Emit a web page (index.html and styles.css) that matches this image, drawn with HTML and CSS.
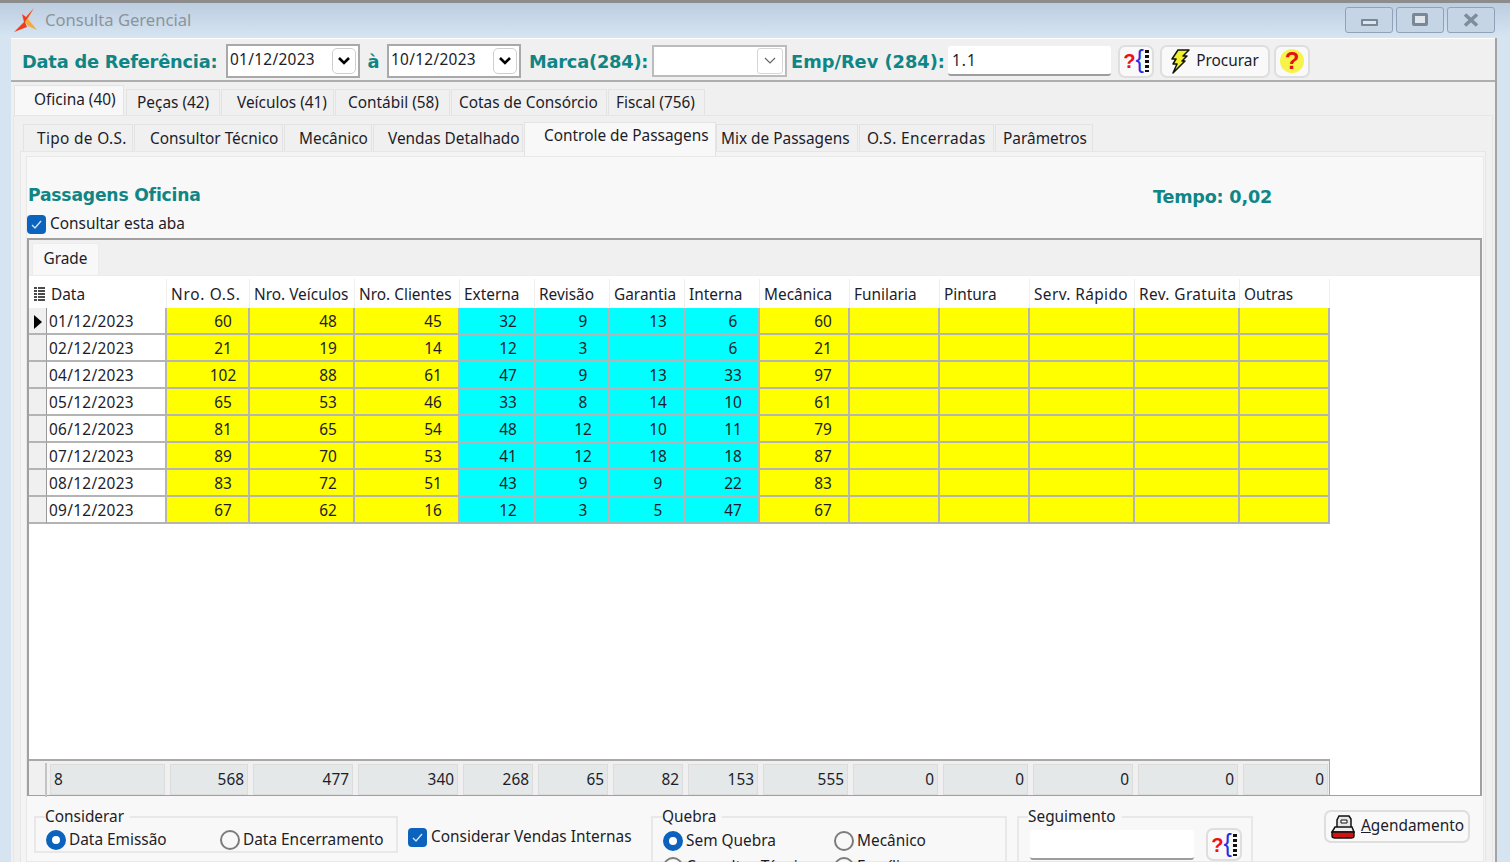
FILE: index.html
```html
<!DOCTYPE html>
<html lang="pt-BR">
<head>
<meta charset="utf-8">
<title>Consulta Gerencial</title>
<link rel="stylesheet" href="styles.css">
</head>
<body>
<div class="window">
  <header class="titlebar">
    <svg class="logo" width="26" height="26" viewBox="0 0 26 26"><path d="M21 0 L15 11 L24 22 L15 18 L12 14 Z" fill="#f6a93f"/><path d="M21 0 L13 9 L9 6 L11 14 L1 24 L14 19 L12 14 Z" fill="#ee3f1d"/></svg>
    <span class="title">Consulta Gerencial</span>
    <div class="winbtns">
      <button class="winbtn"><span class="g-min"></span></button>
      <button class="winbtn"><span class="g-max"></span></button>
      <button class="winbtn"><svg width="18" height="14" viewBox="0 0 18 14"><path d="M3 1.5 L15 12.5 M15 1.5 L3 12.5" stroke="#7f8d9b" stroke-width="3.6" fill="none"/></svg></button>
    </div>
  </header>
  <main class="client">
    <div class="toolbar">
      <span class="lbl l-data">Data de Referência:</span>
      <div class="date"><span>01/12/2023</span><b class="drop"><svg width="14" height="10" viewBox="0 0 14 10"><path d="M2 2 L7 7 L12 2" stroke="#000" stroke-width="2.6" fill="none"/></svg></b></div>
      <span class="lbl l-a">à</span>
      <div class="date"><span>10/12/2023</span><b class="drop"><svg width="14" height="10" viewBox="0 0 14 10"><path d="M2 2 L7 7 L12 2" stroke="#000" stroke-width="2.6" fill="none"/></svg></b></div>
      <span class="lbl l-marca">Marca(284):</span>
      <div class="combo"><b class="drop2"><svg width="14" height="9" viewBox="0 0 14 9"><path d="M2 2 L7 7 L12 2" stroke="#666" stroke-width="1.2" fill="none"/></svg></b></div>
      <span class="lbl l-emp">Emp/Rev (284):</span>
      <div class="edit">1.1</div>
      <button class="btn b-q"><span class="qm">?</span><span class="br">{</span><i class="dots"></i></button>
      <button class="btn b-proc"><svg width="20" height="25" viewBox="0 0 20 25"><path d="M8 1 L19 1 L13 7 L17 7 L12 12 L15 12 L3 24 L7 15 L3 15 L6 10 L2 10 Z" fill="#f2ef2c" stroke="#111" stroke-width="1.5" stroke-linejoin="round"/></svg><span>Procurar</span></button>
      <button class="btn b-help"><span class="helpq">?</span></button>
    </div>
    <div class="pages">
      <nav class="tabs outer">
        <span class="tab on t1">Oficina (40)</span>
        <span class="tab t2">Peças (42)</span>
        <span class="tab t3">Veículos (41)</span>
        <span class="tab t4">Contábil (58)</span>
        <span class="tab t5">Cotas de Consórcio</span>
        <span class="tab t6">Fiscal (756)</span>
      </nav>
      <div class="outer-panel">
        <nav class="tabs inner">
          <span class="tab i1">Tipo de O.S.</span>
          <span class="tab i2">Consultor Técnico</span>
          <span class="tab i3">Mecânico</span>
          <span class="tab i4">Vendas Detalhado</span>
          <span class="tab on i5">Controle de Passagens</span>
          <span class="tab i6">Mix de Passagens</span>
          <span class="tab i7">O.S. Encerradas</span>
          <span class="tab i8">Parâmetros</span>
        </nav>
        <section class="sheet">
          <div class="sheetin">
          <div class="headrow">
            <h2>Passagens Oficina</h2>
            <span class="tempo">Tempo: 0,02</span>
          </div>
          <label class="chk c-top"><i class="box"><svg width="13" height="11" viewBox="0 0 13 11"><path d="M2 6 L5 9 L11 2" stroke="#cfe3f7" stroke-width="1.4" fill="none"/></svg></i>Consultar esta aba</label>
          <div class="gridbox">
            <div class="gridtabs"><span class="gtab">Grade</span></div>
            <div class="gridbody">
              <div class="row hdr">
                <div class="ind"><svg width="11" height="14" viewBox="0 0 11 14"><path d="M0 1h3M4 1h7M0 4h3M4 4h7M0 7h3M4 7h7M0 10h3M4 10h7M0 13h3M4 13h7" stroke="#111" stroke-width="1.4"/></svg></div>
                <div>Data</div><div class="wide">Nro. O.S.</div><div>Nro. Veículos</div><div>Nro. Clientes</div><div>Externa</div><div>Revisão</div><div>Garantia</div><div>Interna</div><div>Mecânica</div><div>Funilaria</div><div>Pintura</div><div class="wider">Serv. Rápido</div><div class="wider">Rev. Gratuita</div><div>Outras</div>
              </div>
              <div class="row"><div class="ind cur"><i class="arrow"></i></div><div class="d">01/12/2023</div><div class="y">60</div><div class="y">48</div><div class="y">45</div><div class="c">32</div><div class="c">9</div><div class="c">13</div><div class="c">6</div><div class="y">60</div><div class="y"></div><div class="y"></div><div class="y"></div><div class="y"></div><div class="y"></div></div>
              <div class="row"><div class="ind"></div><div class="d">02/12/2023</div><div class="y">21</div><div class="y">19</div><div class="y">14</div><div class="c">12</div><div class="c">3</div><div class="c"></div><div class="c">6</div><div class="y">21</div><div class="y"></div><div class="y"></div><div class="y"></div><div class="y"></div><div class="y"></div></div>
              <div class="row"><div class="ind"></div><div class="d">04/12/2023</div><div class="y">102</div><div class="y">88</div><div class="y">61</div><div class="c">47</div><div class="c">9</div><div class="c">13</div><div class="c">33</div><div class="y">97</div><div class="y"></div><div class="y"></div><div class="y"></div><div class="y"></div><div class="y"></div></div>
              <div class="row"><div class="ind"></div><div class="d">05/12/2023</div><div class="y">65</div><div class="y">53</div><div class="y">46</div><div class="c">33</div><div class="c">8</div><div class="c">14</div><div class="c">10</div><div class="y">61</div><div class="y"></div><div class="y"></div><div class="y"></div><div class="y"></div><div class="y"></div></div>
              <div class="row"><div class="ind"></div><div class="d">06/12/2023</div><div class="y">81</div><div class="y">65</div><div class="y">54</div><div class="c">48</div><div class="c">12</div><div class="c">10</div><div class="c">11</div><div class="y">79</div><div class="y"></div><div class="y"></div><div class="y"></div><div class="y"></div><div class="y"></div></div>
              <div class="row"><div class="ind"></div><div class="d">07/12/2023</div><div class="y">89</div><div class="y">70</div><div class="y">53</div><div class="c">41</div><div class="c">12</div><div class="c">18</div><div class="c">18</div><div class="y">87</div><div class="y"></div><div class="y"></div><div class="y"></div><div class="y"></div><div class="y"></div></div>
              <div class="row"><div class="ind"></div><div class="d">08/12/2023</div><div class="y">83</div><div class="y">72</div><div class="y">51</div><div class="c">43</div><div class="c">9</div><div class="c">9</div><div class="c">22</div><div class="y">83</div><div class="y"></div><div class="y"></div><div class="y"></div><div class="y"></div><div class="y"></div></div>
              <div class="row"><div class="ind"></div><div class="d">09/12/2023</div><div class="y">67</div><div class="y">62</div><div class="y">16</div><div class="c">12</div><div class="c">3</div><div class="c">5</div><div class="c">47</div><div class="y">67</div><div class="y"></div><div class="y"></div><div class="y"></div><div class="y"></div><div class="y"></div></div>
            </div>
            <div class="footer">
              <div class="row foot">
                <div class="find"></div><div class="ft tl">8</div><div class="ft">568</div><div class="ft">477</div><div class="ft">340</div><div class="ft">268</div><div class="ft">65</div><div class="ft">82</div><div class="ft">153</div><div class="ft">555</div><div class="ft">0</div><div class="ft">0</div><div class="ft">0</div><div class="ft">0</div><div class="ft">0</div>
              </div>
            </div>
          </div>
          <div class="options">
            <fieldset class="fs fs-cons">
              <legend>Considerar</legend>
              <div class="radios two">
                <label class="rad"><i class="dot on"></i>Data Emissão</label>
                <label class="rad"><i class="dot"></i>Data Encerramento</label>
              </div>
            </fieldset>
            <label class="chk c-vend"><i class="box"><svg width="13" height="11" viewBox="0 0 13 11"><path d="M2 6 L5 9 L11 2" stroke="#cfe3f7" stroke-width="1.4" fill="none"/></svg></i>Considerar Vendas Internas</label>
            <fieldset class="fs fs-queb">
              <legend>Quebra</legend>
              <div class="radios q">
                <label class="rad"><i class="dot on"></i>Sem Quebra</label>
                <label class="rad"><i class="dot"></i>Mecânico</label>
                <label class="rad"><i class="dot"></i>Consultor Técnico</label>
                <label class="rad"><i class="dot"></i>Família</label>
              </div>
            </fieldset>
            <fieldset class="fs fs-seg">
              <legend>Seguimento</legend>
              <div class="segrow">
                <div class="edit e-seg"></div>
                <button class="btn b-q"><span class="qm">?</span><span class="br">{</span><i class="dots"></i></button>
              </div>
            </fieldset>
            <button class="btn b-agen"><svg width="26" height="26" viewBox="0 0 26 26"><path d="M9 2 H19 L21 5 V14 H7 V6 Z" fill="#e8e8e8" stroke="#111" stroke-width="1.5"/><path d="M11 6 H17 V9 H11 Z" fill="#fff" stroke="#111"/><path d="M5 13 H22 L24 18 H2 Z" fill="#efefef" stroke="#111" stroke-width="1.5"/><path d="M2 18 H24 V22 Q24 24 21 24 H5 Q2 24 2 22 Z" fill="#d11212" stroke="#111" stroke-width="1.4"/></svg><span><u>A</u>gendamento</span></button>
          </div>
          </div>
        </section>
      </div>
    </div>
  </main>
</div>
</body>
</html>
```
FILE: styles.css
```css
* { box-sizing: border-box; }
html, body { margin: 0; height: 862px; overflow: hidden; }
body { font: 15.4px/1.2 "Noto Sans", "Open Sans", sans-serif; color: #1c1c2a; background: #d6e4f1; }
button { font: inherit; color: inherit; }
.window { width: 1510px; height: 862px; display: flex; flex-direction: column; overflow: hidden; }

.titlebar { flex: 0 0 38px; display: flex; align-items: center; border-top: 3px solid #8c8c8c; background: linear-gradient(#bccde0, #d7e5f2); padding: 0 15px 0 13px; }
.logo { margin-right: 6px; margin-top: 1px; flex: none; }
.title { color: #8b949c; font-size: 16.6px; margin-top: -1px; }
.winbtns { margin-left: auto; display: flex; gap: 3px; align-self: flex-start; margin-top: 4px; }
.winbtn { width: 48px; height: 26px; padding: 0; display: flex; align-items: center; justify-content: center; background: #c6d5e6; border: 1px solid #90a2b8; border-radius: 3px; }
.g-min { width: 17px; height: 7px; margin-top: 5px; background: #dfe5eb; border: 2px solid #7a8794; border-radius: 1px; }
.g-max { width: 16px; height: 13px; margin-top: -1px; background: #dfe5eb; border: 3px solid #7a8794; border-radius: 2px; }

.client { flex: 1; margin-left: 11px; width: 1486px; background: #f0f0f0; border-right: 2px solid #a3a3a3; display: flex; flex-direction: column; min-height: 0; }
.toolbar { height: 44px; flex: none; display: flex; align-items: center; padding: 2px 0 0 11px; border-top: 1px solid #fff; border-bottom: 2px solid #aeaeae; background: #f0f0f0; }
.lbl { font: bold 17.8px/1 "DejaVu Sans", sans-serif; color: #0f8585; white-space: nowrap; letter-spacing: -.2px; margin-top: 2px; }
.l-data { width: 204px; }
.l-a { width: 27px; text-align: center; }
.l-marca { width: 123px; margin-left: 8px; }
.l-emp { width: 157px; margin-left: 4px; letter-spacing: 0; }
.date { width: 134px; height: 34px; display: flex; justify-content: space-between; background: #fff; border: 2px solid #a9a9a9; padding: 2px; }
.date span { margin-top: 2px; line-height: 20px; letter-spacing: .3px; }
.drop { width: 24px; height: 26px; background: #fff; border: 1px solid #cfcfcf; border-radius: 5px; display: flex; align-items: center; justify-content: center; }
.combo { width: 135px; height: 32px; display: flex; justify-content: flex-end; align-items: center; background: #fff; border: 2px solid #bcbcbc; padding-right: 2px; }
.drop2 { width: 26px; height: 26px; border: 1px solid #d6d6d6; border-radius: 3px; display: flex; align-items: center; justify-content: center; }
.edit { background: #fff; border-bottom: 2px solid #9d9d9d; border-radius: 3px; }
.toolbar .edit { width: 163px; height: 30px; line-height: 30px; padding-left: 4px; letter-spacing: 1px; }
.btn { display: flex; align-items: center; justify-content: center; background: #f9f9f9; border: 2px solid #dedede; border-radius: 7px; padding: 0; height: 33px; }
.toolbar .btn { margin-top: 1px; }
.b-q { width: 36px; margin-left: 7px; font: bold 20px/1 "Liberation Sans", sans-serif; }
.qm { color: #f01010; }
.br { color: #2a2ae0; font-weight: normal; font-size: 25px; margin-top: -3px; }
.dots { width: 4px; height: 22px; margin-left: 1px; background: repeating-linear-gradient(#111 0 3px, #fff 3px 5px); }
.b-proc { width: 110px; margin-left: 6px; gap: 6px; padding-right: 1px; }
.b-proc span { margin-top: 1px; }
.b-help { width: 36px; margin-left: 4px; }
.helpq { width: 24px; height: 24px; border-radius: 50%; background: #f6f34a; color: #e21414; font: bold 24px/24px "Liberation Sans", sans-serif; text-align: center; }

.pages { flex: 1; min-height: 0; display: flex; flex-direction: column; padding: 3px 2px 0 2px; }
.tabs { display: flex; align-items: flex-end; flex: none; }
.tab { display: flex; align-items: center; white-space: nowrap; background: #f0f0f0; border: 1px solid #e3e3e3; border-bottom: 0; margin-right: 1px; padding-top: 2px; }
.tab.on { background: #f8f8f8; padding-top: 0; }
.outer { height: 30px; }
.outer .tab { height: 26px; }
.outer .tab.on { height: 30px; padding-bottom: 1px; }
.t1 { width: 110px; margin: 0 2px 0 1px; padding-left: 19px; }
.t2 { width: 94px; padding-left: 10px; }
.t3 { width: 113px; padding-left: 15px; }
.t4 { width: 115px; padding-left: 12px; }
.t5 { width: 156px; padding-left: 7px; }
.t6 { width: 97px; padding-left: 7px; }
.outer-panel { flex: 1; min-height: 0; display: flex; flex-direction: column; background: #f0f0f0; border: 1px solid #e6e6e6; border-bottom: 0; padding: 5px 6px 0 6px; }
.inner { height: 35px; padding-left: 3px; margin-bottom: -5px; position: relative; z-index: 1; }
.inner .tab { height: 27px; margin-bottom: 5px; }
.inner .tab.on { height: 34px; margin-bottom: 0; padding-bottom: 7px; }
.i1 { width: 110px; padding-left: 13px; letter-spacing: .35px; }
.i2 { width: 149px; padding-left: 15px; }
.i3 { width: 88px; padding-left: 14px; }
.i4 { width: 150px; padding-left: 14px; }
.i5 { width: 192px; margin-right: 0; padding-left: 19px; }
.i6 { width: 142px; padding-left: 4px; }
.i7 { width: 135px; padding-left: 7px; letter-spacing: .4px; }
.i8 { width: 98px; padding-left: 7px; }
.sheet { flex: 1; min-height: 0; background: #f4f4f4; border: 1px solid #e6e6e6; border-bottom: 0; padding: 4px 1px 0 5px; }
.sheetin { height: 100%; background: #f8f8f8; border: 1px solid #e8e8e8; padding: 0 1px 0 0; }
.headrow { display: flex; height: 55px; align-items: flex-end; padding-bottom: 8px; }
.headrow h2 { margin: 0; font: bold 17.2px/1 "DejaVu Sans", sans-serif; color: #0f8585; letter-spacing: -.2px; width: 173px; white-space: nowrap; margin-left: 1px; }
.tempo { margin: 0 0 -3px 952px; font: bold 17.6px/1 "DejaVu Sans", sans-serif; color: #0f8585; letter-spacing: -.2px; }
.chk { display: flex; align-items: center; gap: 4px; height: 24px; }
.box { width: 19px; height: 19px; background: #0c63bd; border-radius: 4px; display: flex; align-items: center; justify-content: center; flex: none; }
.c-top { margin-bottom: 2px; }

.gridbox { --cols: 18px 120px 83px 105px 105px 75px 75px 75px 75px 90px 90px 90px 105px 105px 90px; height: 558px; background: #fff; border: 2px solid #a0a0a0; border-bottom-width: 1px; display: flex; flex-direction: column; }
.gridtabs { height: 36px; flex: none; background: #f0f0f0; padding: 3px 0 0 3px; display: flex; border-bottom: 1px solid #ececec; }
.gtab { width: 67px; display: flex; align-items: center; justify-content: center; background: #f8f8f8; border: 1px solid #ececec; border-bottom: 0; }
.gridbody { flex: 1; padding-top: 3px; min-height: 0; }
.row { display: grid; grid-template-columns: var(--cols); width: 1301px; }
.hdr { height: 29px; }
.hdr > div { display: flex; align-items: center; padding: 3px 0 0 4px; border-right: 1px solid #efefef; white-space: nowrap; }
.hdr .wide { letter-spacing: .7px; }
.hdr .wider { letter-spacing: .4px; }
.row:not(.hdr):not(.foot) { height: 27px; }
.ind { background: #f0f0f0; display: flex; align-items: center; justify-content: center; border-bottom: 2px solid #b4b4b4; border-right: 1px solid #999; padding-top: 2px; }
.hdr .ind { background: #fff; border: 0; padding: 0 0 0 2px; }
.arrow { width: 0; height: 0; border-left: 8px solid #000; border-top: 7px solid transparent; border-bottom: 7px solid transparent; margin-left: 1px; }
.d, .y, .c { display: flex; align-items: center; border-bottom: 2px solid #b4b4b4; border-right: 2px solid #b4b4b4; white-space: nowrap; padding-top: 4px; }
.d { background: #fff; padding-left: 2px; letter-spacing: .3px; }
.y, .c { justify-content: center; padding-left: calc(100% - 52px); }
.y { background: #ff0; }
.c { background: #0ff; }

.footer { flex: none; height: 36px; background: #fff; }
.foot { height: 100%; background: #f0f0f0; border-top: 2px solid #a8a8a8; padding-top: 2px; padding-bottom: 1px; border-right: 1px solid #a8a8a8; }
.find { border-right: 2px solid #c4c4c4; }
.ft { margin: 1px 2px 2px 3px; background: #e4e8e8; border: 1px solid #dcdcdc; text-align: right; padding-right: 3px; line-height: 29px; }
.ft.tl { text-align: left; padding-left: 3px; }

.options { display: flex; align-items: flex-start; height: 80px; overflow: hidden; padding-top: 15px; }
.fs { margin: 0; border: 2px solid #e8e8e8; padding: 0; min-width: 0; }
.fs legend { padding: 0 6px 0 0; margin-left: 9px; line-height: 20px; }
.fs-cons { width: 364px; height: 46px; margin-left: 7px; margin-top: -4px; }
.radios.two { display: grid; grid-template-columns: 174px 1fr; padding-left: 10px; margin-top: 0; }
.rad { display: flex; align-items: center; gap: 3px; height: 26px; white-space: nowrap; }
.dot { width: 20px; height: 20px; border-radius: 50%; background: #f8f8f8; border: 2px solid #7c7c7c; flex: none; }
.dot.on { background: #fff; border: 6px solid #0c63bd; }
.c-vend { margin: 14px 0 0 10px; width: 243px; flex: none; }
.fs-queb { width: 356px; height: 90px; margin-top: -4px; }
.radios.q { display: grid; grid-template-columns: 171px 1fr; padding-left: 10px; margin-top: 1px; }
.fs-seg { width: 236px; height: 90px; margin: -4px 0 0 10px; }
.segrow { display: flex; align-items: center; padding: 1px 0 0 11px; }
.e-seg { width: 164px; height: 30px; }
.segrow .b-q { margin-left: 12px; }
.b-agen { width: 146px; margin-left: 71px; margin-top: -1px; gap: 5px; flex: none; }
```
